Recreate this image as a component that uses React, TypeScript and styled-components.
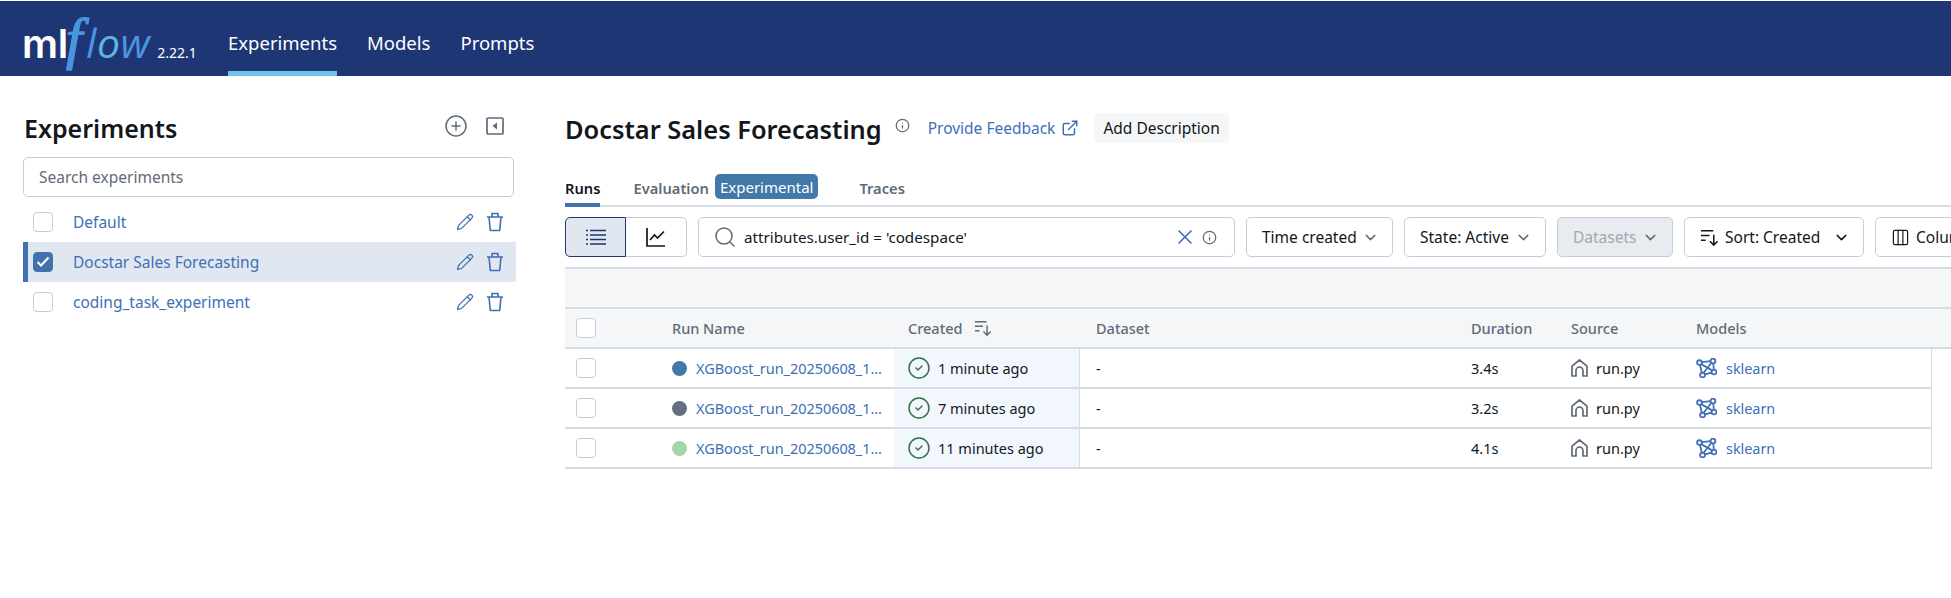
import { FC, ReactNode } from "react"
import styled, { createGlobalStyle } from "styled-components"
import { ChevronDown, CircleCheck, CirclePlus, Columns3, ExternalLink, Info, Pencil, Search, X } from "lucide-react"

const GlobalStyle = createGlobalStyle`
  html, body { margin: 0; padding: 0; height: 100%; background: #fff; overflow: hidden; }
  body { font-family: "Noto Sans", "Open Sans", sans-serif; font-size: 15.5px; color: #11171c; }
  * { box-sizing: border-box; }
`

const experiments = [
  { name: "Default", selected: false },
  { name: "Docstar Sales Forecasting", selected: true },
  { name: "coding_task_experiment", selected: false },
]

const runs = [
  { color: "#4279a8", created: "1 minute ago", duration: "3.4s" },
  { color: "#64707f", created: "7 minutes ago", duration: "3.2s" },
  { color: "#a3d6a7", created: "11 minutes ago", duration: "4.1s" },
]

const SortIcon: FC<{ size?: number }> = ({ size = 20 }) => (
  <svg width={size} height={size} viewBox="0 0 20 20" fill="none" stroke="currentColor" strokeWidth="1.6">
    <path d="M1 3h13M1 8h9M1 13h5" />
    <path d="M14.5 7v11M10.5 14l4 4 4-4" />
  </svg>
)

const ModelIcon = () => (
  <svg width="21" height="20" viewBox="0 0 21 20" fill="none" stroke="#3f6fb5" strokeWidth="1.8">
    <circle cx="3.500" cy="4.500" r="2.400" />
    <circle cx="17" cy="3" r="2.400" />
    <circle cx="18" cy="14" r="2.400" />
    <circle cx="6.500" cy="17" r="2.400" />
    <path d="M6 4.200l8.700-1M4 7l1.800 7.600M17.300 5.500l.5 6M8.900 16.400l6.700-1.800M5.400 6.200l10.700 6.200M15.300 5l-7.700 9.800" />
  </svg>
)

const HomeIcon = () => (
  <svg width="17" height="18" viewBox="0 0 17 18" fill="none" stroke="#5f6b78" strokeWidth="1.7" strokeLinejoin="round">
    <path d="M1 17V7.200L8.500 1 16 7.200V17h-4v-5.500a3.500 3.500 0 0 0-7 0V17z" />
  </svg>
)

const TrashIcon = () => (
  <svg width="18" height="20" viewBox="0 0 18 20" fill="none" stroke="#3f6fb5" strokeWidth="1.600" strokeLinejoin="round">
    <path d="M1 5h16M6 5V1.500h6V5M3 5l1.300 13.500h9.400L15 5" />
  </svg>
)

const ListIcon = () => (
  <svg width="20" height="16" viewBox="0 0 20 16" fill="none" stroke="#1f3673" strokeWidth="1.7">
    <path d="M0 1.5h2M4 1.5h16M0 6h2M4 6h16M0 10.500h2M4 10.500h16M0 15h2M4 15h16" />
  </svg>
)

const ChartIcon = () => (
  <svg width="20" height="20" viewBox="0 0 20 20" fill="none" stroke="#11171c" strokeWidth="1.7">
    <path d="M1 1v18h18" />
    <path d="M4 13l4.500-5 3 3L18 4.500" />
  </svg>
)

const CollapseIcon = () => (
  <svg width="18" height="18" viewBox="0 0 18 18" fill="none">
    <rect x="1" y="1" width="16" height="16" rx="1" stroke="#5f6b78" strokeWidth="1.7" />
    <path d="M11 5.500v7L6.500 9z" fill="#5f6b78" />
  </svg>
)

const Page = styled.div`
  display: flex;
  flex-direction: column;
  width: 1951px;
  height: 598px;
  overflow: hidden;
  padding-top: 1px;
`

const Header = styled.header`
  display: flex;
  align-items: stretch;
  height: 75px;
  flex: none;
  padding-left: 22px;
  background: #1e3674;
  color: #fff;
`

const Logo = styled.div`
  display: flex;
  align-items: baseline;
  width: 206px;
  height: 75px;
  white-space: nowrap;
  line-height: 75px;
`

const LogoMl = styled.span`
  font-family: "Inter", sans-serif;
  font-size: 40px;
  font-weight: 600;
  letter-spacing: -0.3px;
`

const LogoF = styled.span`
  margin-left: -2px;
  font-family: "Liberation Serif", serif;
  font-size: 58px;
  font-style: italic;
  color: #4a94e0;
  -webkit-text-stroke: 1.5px #4a94e0;
`

const LogoLow = styled.span`
  margin-left: 4px;
  font-family: "Open Sans", sans-serif;
  font-size: 41px;
  font-style: italic;
  font-weight: 500;
  color: #4a94e0;
  letter-spacing: 0.5px;
`

const LogoO = styled.span`
  color: #5cb6e2;
`

const LogoVersion = styled.span`
  margin-left: 7px;
  font-size: 14px;
`

const NavLink = styled.a<{ $active?: boolean }>`
  display: flex;
  align-items: center;
  margin-right: 30px;
  padding-top: 12px;
  font-size: 18.5px;
  color: #fff;
  border-bottom: 5px solid ${({ $active }) => ($active ? "#6dc3ea" : "transparent")};
`

const Body = styled.div`
  display: flex;
  flex: 1;
  min-height: 0;
`

const Sidebar = styled.aside`
  flex: none;
  width: 541px;
  padding: 35px 25px 0 23px;
`

const SidebarHead = styled.div`
  display: flex;
  align-items: center;
  height: 40px;
  margin-bottom: 6px;
`

const SidebarTitle = styled.h1`
  flex: 1;
  margin: 0 0 0 1px;
  padding-bottom: 7px;
  font-size: 25px;
  font-weight: 600;
  color: #11171c;
`

const HeadIcons = styled.div`
  display: flex;
  align-items: center;
  gap: 18px;
  margin-right: 12px;
  margin-top: -10px;
  color: #5f6b78;
`

const SearchInput = styled.div`
  display: flex;
  align-items: center;
  height: 40px;
  margin: 0 2px 5px 0;
  padding-left: 15px;
  border: 1px solid #c3cdd9;
  border-radius: 5px;
  color: #5f6b78;
  font-size: 15.5px;
`

const ExperimentRow = styled.div<{ $selected?: boolean }>`
  display: flex;
  align-items: center;
  height: 40px;
  padding-left: ${({ $selected }) => ($selected ? "5px" : "10px")};
  background: ${({ $selected }) => ($selected ? "#e0e7f0" : "transparent")};
  border-left: ${({ $selected }) => ($selected ? "5px solid #4272ad" : "none")};
  color: #4070b5;
`

const Box = styled.span<{ $checked?: boolean }>`
  display: inline-flex;
  align-items: center;
  justify-content: center;
  flex: none;
  width: 20px;
  height: 20px;
  border-radius: 4px;
  border: 1px solid ${({ $checked }) => ($checked ? "#4272ad" : "#c3cdd9")};
  background: ${({ $checked }) => ($checked ? "#4272ad" : "#fff")};
`

const ExperimentName = styled.span`
  flex: 1;
  margin-left: 20px;
  font-size: 15.5px;
`

const RowActions = styled.div`
  display: flex;
  align-items: center;
  gap: 12px;
  margin-right: 12px;
  color: #3f6fb5;
`

const Main = styled.main`
  flex: 1;
  min-width: 0;
  overflow: hidden;
`

const TitleRow = styled.div`
  display: flex;
  align-items: center;
  height: 40px;
  margin-top: 32px;
  padding-left: 24px;
`

const Title = styled.h2`
  margin: 0;
  padding-top: 2px;
  font-size: 25.4px;
  font-weight: 600;
  color: #11171c;
`

const TitleInfo = styled.span`
  display: flex;
  margin: 0 18px 6px 13px;
  color: #5f6b78;
`

const FeedbackLink = styled.a`
  display: flex;
  align-items: center;
  gap: 6px;
  margin-right: 15px;
  color: #4070b5;
  font-size: 15.5px;
`

const DescriptionButton = styled.button`
  height: 30px;
  padding: 0 9px;
  border: none;
  border-radius: 4px;
  background: #f5f6f8;
  color: #11171c;
  font: inherit;
  font-size: 15.5px;
`

const Tabs = styled.div`
  display: flex;
  align-items: flex-end;
  height: 59px;
  margin-left: 24px;
  border-bottom: 2px solid #d5dce4;
`

const Tab = styled.span<{ $active?: boolean; $gap: number }>`
  display: flex;
  align-items: center;
  height: 31px;
  margin-right: ${({ $gap }) => $gap}px;
  margin-bottom: -2px;
  padding-bottom: 3px;
  font-size: 14.7px;
  font-weight: 600;
  color: ${({ $active }) => ($active ? "#11171c" : "#5f6b78")};
  border-bottom: 4px solid ${({ $active }) => ($active ? "#4272ad" : "transparent")};
`

const Badge = styled.span`
  display: flex;
  align-items: center;
  height: 25px;
  margin: 0 41px 6px 6px;
  padding: 0 5px;
  border-radius: 5px;
  background: #4279a8;
  color: #fff;
  font-size: 15px;
`

const Toolbar = styled.div`
  display: flex;
  align-items: center;
  gap: 11px;
  height: 60px;
  padding-left: 24px;
`

const ViewToggle = styled.div`
  display: flex;
  flex: none;
`

const ToggleSide = styled.span<{ $active?: boolean }>`
  display: flex;
  align-items: center;
  justify-content: center;
  height: 40px;
  width: 61px;
  background: ${({ $active }) => ($active ? "#e0e7f0" : "#fff")};
  border: 1px solid ${({ $active }) => ($active ? "#1f3673" : "#c3cdd9")};
  border-left-width: ${({ $active }) => ($active ? "1px" : "0")};
  border-radius: ${({ $active }) => ($active ? "5px 0 0 5px" : "0 5px 5px 0")};
`

const QueryBox = styled.div`
  display: flex;
  flex: none;
  align-items: center;
  width: 537px;
  height: 40px;
  padding: 0 17px 0 14px;
  border: 1px solid #c3cdd9;
  border-radius: 5px;
  color: #5f6b78;
`

const QueryText = styled.span`
  flex: 1;
  margin-left: 7px;
  color: #11171c;
  font-size: 15.2px;
`

const ClearIcon = styled(X)`
  margin-right: 5px;
  color: #3f6fb5;
`

const Dropdown = styled.div<{ $width: number; $disabled?: boolean }>`
  display: flex;
  flex: none;
  align-items: center;
  justify-content: space-between;
  width: ${({ $width }) => $width}px;
  height: 40px;
  padding: 0 13px 0 15px;
  border: 1px solid #c3cdd9;
  border-radius: 5px;
  background: ${({ $disabled }) => ($disabled ? "#e8ebef" : "#fff")};
  color: ${({ $disabled }) => ($disabled ? "#a0a9b4" : "#11171c")};
  font-size: 15.5px;
  white-space: nowrap;
`

const DropdownLabel = styled.span`
  display: flex;
  align-items: center;
  gap: 6px;
`

const Chevron = styled(ChevronDown)<{ $muted?: boolean }>`
  color: ${({ $muted }) => ($muted ? "#5f6b78" : "#11171c")};
`

const Band = styled.div`
  height: 42px;
  margin-left: 24px;
  background: #f5f6f8;
  border-top: 2px solid #d5dce4;
  border-bottom: 2px solid #d5dce4;
`

const gridColumns = "107px 222px 186px 391px 100px 125px 236px"

const HeadRow = styled.div`
  display: grid;
  grid-template-columns: ${gridColumns};
  align-items: center;
  height: 40px;
  margin-left: 24px;
  background: #f5f6f8;
  border-bottom: 2px solid #d5dce4;
  color: #5f6b78;
  font-size: 14.5px;
  font-weight: 500;
`

const DataRow = styled.div`
  display: grid;
  grid-template-columns: ${gridColumns};
  align-items: stretch;
  width: 1367px;
  height: 40px;
  margin-left: 24px;
  border-bottom: 2px solid #d5dce4;
  border-right: 1px solid #d5dce4;
  font-size: 14.5px;
`

const Cell = styled.div<{ $pad?: number; $highlight?: boolean; $gap?: number }>`
  display: flex;
  align-items: center;
  gap: ${({ $gap }) => $gap ?? 7}px;
  min-width: 0;
  padding-left: ${({ $pad }) => $pad ?? 0}px;
  white-space: nowrap;
  ${({ $highlight }) => $highlight && "background: #f2f7fe; border-right: 1px solid #d5dce4;"}
`

const Dot = styled.span<{ $color: string }>`
  flex: none;
  width: 15px;
  height: 15px;
  margin-right: 2px;
  border-radius: 50%;
  background: ${({ $color }) => $color};
`

const RunLink = styled.a`
  color: #4070b5;
  letter-spacing: -0.06px;
`

const CreatedIcon = styled(CircleCheck)`
  flex: none;
  color: #3a7046;
`

const SortGlyph = styled.span`
  display: flex;
  margin-left: 4px;
`

const Dropdowns: { label: ReactNode; width: number; disabled?: boolean }[] = [
  { label: "Time created", width: 147 },
  { label: "State: Active", width: 142 },
  { label: "Datasets", width: 116, disabled: true },
  {
    label: (
      <>
        <SortIcon size={19} />
        Sort: Created
      </>
    ),
    width: 180,
  },
]

const App: FC = () => (
  <>
    <GlobalStyle />
    <Page>
      <Header>
        <Logo>
          <LogoMl>ml</LogoMl>
          <LogoF>f</LogoF>
          <LogoLow>
            l<LogoO>o</LogoO>w
          </LogoLow>
          <LogoVersion>2.22.1</LogoVersion>
        </Logo>
        <NavLink $active>Experiments</NavLink>
        <NavLink>Models</NavLink>
        <NavLink>Prompts</NavLink>
      </Header>
      <Body>
        <Sidebar>
          <SidebarHead>
            <SidebarTitle>Experiments</SidebarTitle>
            <HeadIcons>
              <CirclePlus size={24} strokeWidth={1.5} />
              <CollapseIcon />
            </HeadIcons>
          </SidebarHead>
          <SearchInput>Search experiments</SearchInput>
          {experiments.map((exp) => (
            <ExperimentRow key={exp.name} $selected={exp.selected}>
              <Box $checked={exp.selected}>
                {exp.selected && (
                  <svg width="14" height="12" viewBox="0 0 14 12" fill="none" stroke="#fff" strokeWidth="2">
                    <path d="M1.500 6l3.500 3.500 7.500-8" />
                  </svg>
                )}
              </Box>
              <ExperimentName>{exp.name}</ExperimentName>
              <RowActions>
                <Pencil size={18} strokeWidth={1.7} />
                <TrashIcon />
              </RowActions>
            </ExperimentRow>
          ))}
        </Sidebar>
        <Main>
          <TitleRow>
            <Title>Docstar Sales Forecasting</Title>
            <TitleInfo>
              <Info size={15} />
            </TitleInfo>
            <FeedbackLink>
              Provide Feedback
              <ExternalLink size={18} />
            </FeedbackLink>
            <DescriptionButton>Add Description</DescriptionButton>
          </TitleRow>
          <Tabs>
            <Tab $active $gap={33}>Runs</Tab>
            <Tab $gap={0}>Evaluation</Tab>
            <Badge>Experimental</Badge>
            <Tab $gap={0}>Traces</Tab>
          </Tabs>
          <Toolbar>
            <ViewToggle>
              <ToggleSide $active>
                <ListIcon />
              </ToggleSide>
              <ToggleSide>
                <ChartIcon />
              </ToggleSide>
            </ViewToggle>
            <QueryBox>
              <Search size={24} strokeWidth={1.5} />
              <QueryText>attributes.user_id = 'codespace'</QueryText>
              <ClearIcon size={24} strokeWidth={1.6} />
              <Info size={15} />
            </QueryBox>
            {Dropdowns.map((d, i) => (
              <Dropdown key={i} $width={d.width} $disabled={d.disabled}>
                <DropdownLabel>{d.label}</DropdownLabel>
                <Chevron size={17} $muted={i < 3} />
              </Dropdown>
            ))}
            <Dropdown $width={150}>
              <DropdownLabel>
                <Columns3 size={19} strokeWidth={1.5} />
                Columns
              </DropdownLabel>
            </Dropdown>
          </Toolbar>
          <Band />
          <HeadRow>
            <Cell $pad={11}>
              <Box />
            </Cell>
            <Cell>Run Name</Cell>
            <Cell $pad={14}>
              Created
              <SortGlyph>
                <SortIcon size={18} />
              </SortGlyph>
            </Cell>
            <Cell $pad={16}>Dataset</Cell>
            <Cell>Duration</Cell>
            <Cell>Source</Cell>
            <Cell>Models</Cell>
          </HeadRow>
          {runs.map((run) => (
            <DataRow key={run.created}>
              <Cell $pad={11}>
                <Box />
              </Cell>
              <Cell>
                <Dot $color={run.color} />
                <RunLink>XGBoost_run_20250608_1...</RunLink>
              </Cell>
              <Cell $pad={13} $highlight>
                <CreatedIcon size={24} strokeWidth={1.5} />
                {run.created}
              </Cell>
              <Cell $pad={16}>-</Cell>
              <Cell>{run.duration}</Cell>
              <Cell $gap={8}>
                <HomeIcon />
                run.py
              </Cell>
              <Cell $gap={9}>
                <ModelIcon />
                <RunLink>sklearn</RunLink>
              </Cell>
            </DataRow>
          ))}
        </Main>
      </Body>
    </Page>
  </>
)

export default App
